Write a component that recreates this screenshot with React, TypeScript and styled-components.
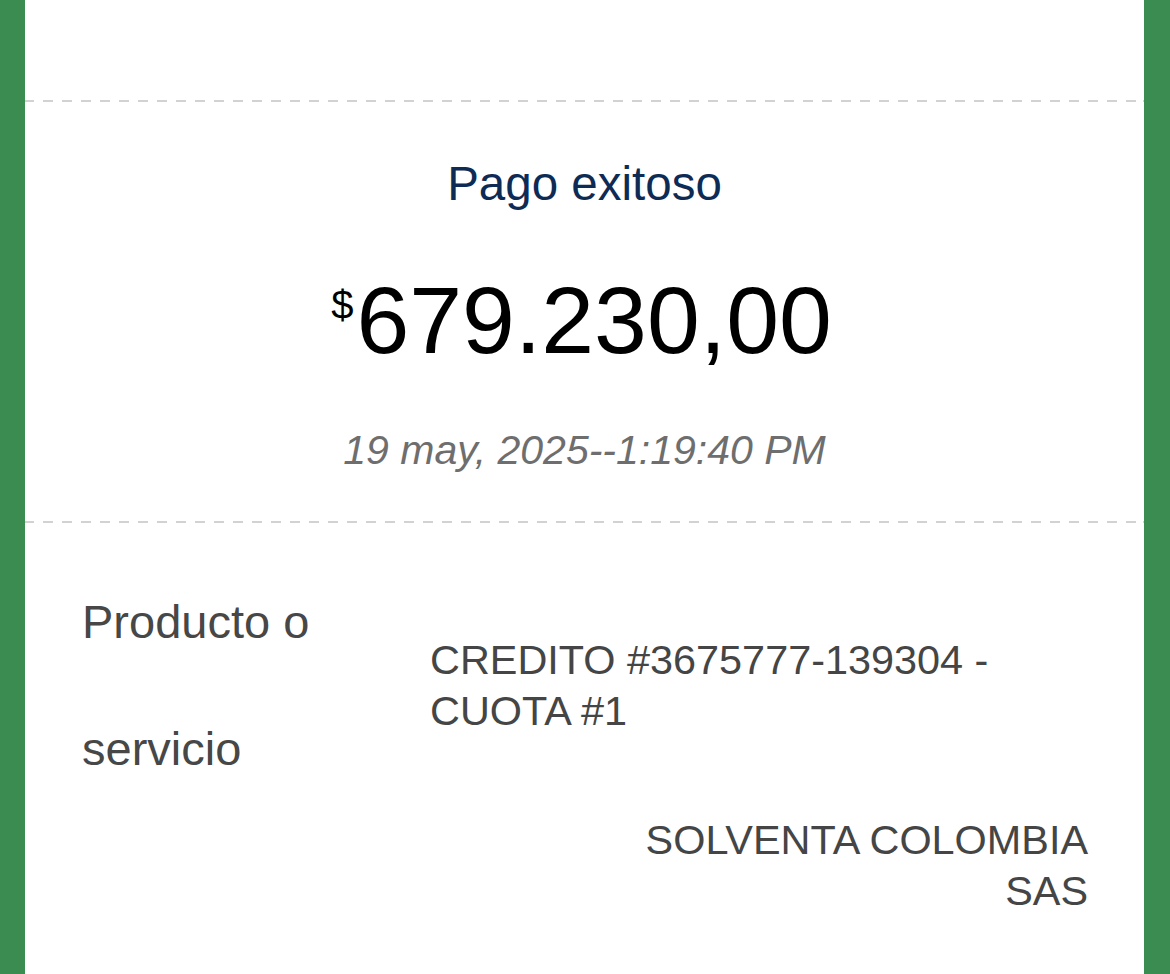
import React from "react";
import styled, { createGlobalStyle } from "styled-components";

const GlobalStyle = createGlobalStyle`
  html, body {
    margin: 0;
    padding: 0;
    background: #3a8c50;
  }
  body {
    font-family: "Liberation Sans", Arial, Helvetica, sans-serif;
  }
`;

interface DetailRow {
  label?: string[];
  value: string[];
  align: "left" | "right";
}

const details: DetailRow[] = [
  {
    label: ["Producto o", "servicio"],
    value: ["CREDITO #3675777-139304 -", "CUOTA #1"],
    align: "left",
  },
  {
    value: ["SOLVENTA COLOMBIA", "SAS"],
    align: "right",
  },
];

const App: React.FC = () => {
  return (
    <>
      <GlobalStyle />
      <Page>
        <Receipt>
          <TopSpace />
          <Divider />
          <Summary>
            <Title>Pago exitoso</Title>
            <Amount>
              <Currency>$</Currency>679.230,00
            </Amount>
            <DateText>19 may, 2025--1:19:40 PM</DateText>
          </Summary>
          <Divider />
          <Details>
            {details.map((row, i) => (
              <Row key={i} $first={i === 0}>
                {row.label && (
                  <Label>
                    {row.label.map((line) => (
                      <div key={line}>{line}</div>
                    ))}
                  </Label>
                )}
                <Value $align={row.align}>
                  {row.value.map((line) => (
                    <div key={line}>{line}</div>
                  ))}
                </Value>
              </Row>
            ))}
          </Details>
        </Receipt>
      </Page>
    </>
  );
};

const Page = styled.div`
  min-height: 974px;
  padding: 0 26px 0 25px;
  display: flex;
  flex-direction: column;
`;

const Receipt = styled.div`
  flex: 1;
  background: #ffffff;
  display: flex;
  flex-direction: column;
`;

const TopSpace = styled.div`
  height: 100px;
`;

const Divider = styled.div`
  height: 2px;
  background-image: repeating-linear-gradient(
    to right,
    #d2d2d2 0 10px,
    transparent 10px 19px
  );
  background-position: -1px 0;
`;

const Summary = styled.div`
  display: flex;
  flex-direction: column;
  align-items: center;
  padding: 54px 0 47px;
`;

const Title = styled.div`
  font-size: 47.5px;
  line-height: 56px;
  color: #0e2b55;
`;

const Amount = styled.div`
  margin-top: 58px;
  font-size: 95px;
  line-height: 100px;
  color: #000000;
  display: flex;
  align-items: flex-start;
  padding-right: 6px;
`;

const Currency = styled.span`
  font-size: 40px;
  line-height: 40px;
  margin-top: 15px;
  margin-right: 3px;
`;

const DateText = styled.div`
  margin-top: 56px;
  font-size: 41px;
  line-height: 48px;
  font-style: italic;
  color: #6e6e6e;
`;

const Details = styled.div`
  padding: 35px 56px 0 57px;
  display: flex;
  flex-direction: column;
`;

const Row = styled.div<{ $first?: boolean }>`
  display: flex;
  align-items: center;
  margin-top: ${({ $first }) => ($first ? "0" : "3px")};
`;

const Label = styled.div`
  width: 348px;
  flex-shrink: 0;
  font-size: 47px;
  line-height: 127px;
  color: #474747;
`;

const Value = styled.div<{ $align: "left" | "right" }>`
  flex: 1;
  font-size: 41.4px;
  line-height: 51px;
  color: #454545;
  text-align: ${({ $align }) => $align};
  margin-top: ${({ $align }) => ($align === "left" ? "2px" : "0")};
`;

export default App;
